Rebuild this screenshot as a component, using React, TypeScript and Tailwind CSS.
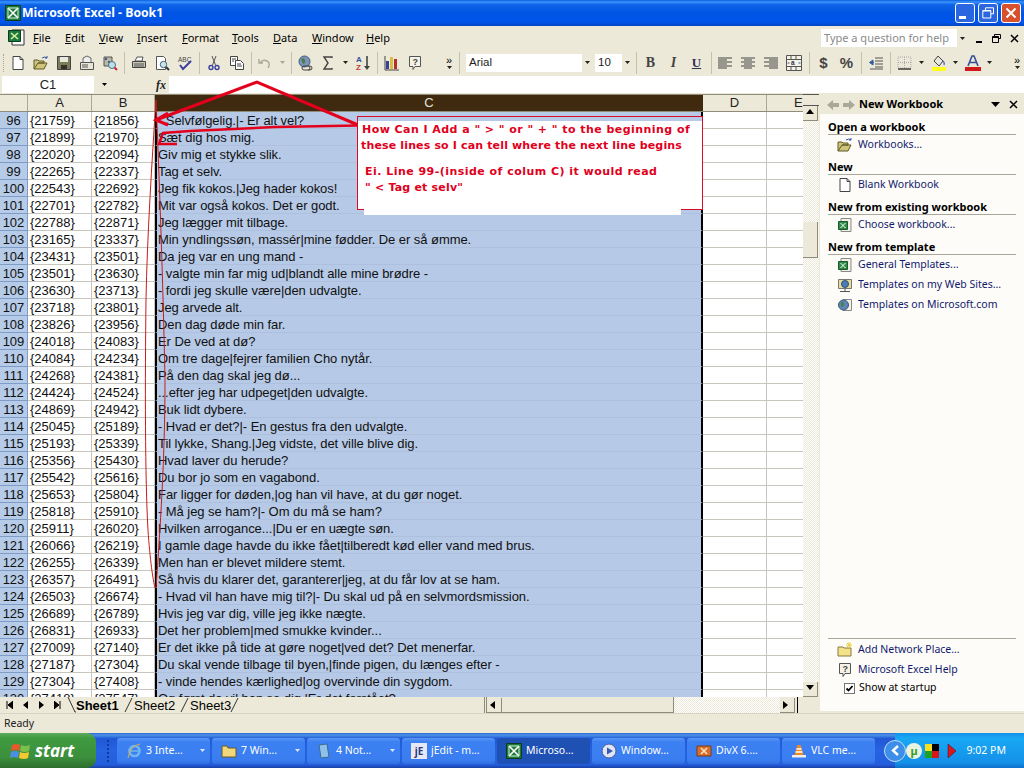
import type { ReactNode } from "react";

const ui = { fontFamily: '"Noto Sans", sans-serif' };
const arial = { fontFamily: '"Liberation Sans", sans-serif' };
const dither = "bg-[repeating-conic-gradient(#ece9d8_0_25%,#ffffff_0_50%)] bg-[length:2px_2px]";

const rows: [number, string, string, string][] = [
  [96, "{21759}", "{21856}", "- Selvfølgelig.|- Er alt vel?"],
  [97, "{21899}", "{21970}", "Sæt dig hos mig."],
  [98, "{22020}", "{22094}", "Giv mig et stykke slik."],
  [99, "{22265}", "{22337}", "Tag et selv."],
  [100, "{22543}", "{22692}", "Jeg fik kokos.|Jeg hader kokos!"],
  [101, "{22701}", "{22782}", "Mit var også kokos. Det er godt."],
  [102, "{22788}", "{22871}", "Jeg lægger mit tilbage."],
  [103, "{23165}", "{23337}", "Min yndlingssøn, massér|mine fødder. De er så ømme."],
  [104, "{23431}", "{23501}", "Da jeg var en ung mand -"],
  [105, "{23501}", "{23630}", "- valgte min far mig ud|blandt alle mine brødre -"],
  [106, "{23630}", "{23713}", "- fordi jeg skulle være|den udvalgte."],
  [107, "{23718}", "{23801}", "Jeg arvede alt."],
  [108, "{23826}", "{23956}", "Den dag døde min far."],
  [109, "{24018}", "{24083}", "Er De ved at dø?"],
  [110, "{24084}", "{24234}", "Om tre dage|fejrer familien Cho nytår."],
  [111, "{24268}", "{24381}", "På den dag skal jeg dø..."],
  [112, "{24424}", "{24524}", "...efter jeg har udpeget|den udvalgte."],
  [113, "{24869}", "{24942}", "Buk lidt dybere."],
  [114, "{25045}", "{25189}", "- Hvad er det?|- En gestus fra den udvalgte."],
  [115, "{25193}", "{25339}", "Til lykke, Shang.|Jeg vidste, det ville blive dig."],
  [116, "{25356}", "{25430}", "Hvad laver du herude?"],
  [117, "{25542}", "{25616}", "Du bor jo som en vagabond."],
  [118, "{25653}", "{25804}", "Far ligger for døden,|og han vil have, at du gør noget."],
  [119, "{25818}", "{25910}", "- Må jeg se ham?|- Om du må se ham?"],
  [120, "{25911}", "{26020}", "Hvilken arrogance...|Du er en uægte søn."],
  [121, "{26066}", "{26219}", "I gamle dage havde du ikke fået|tilberedt kød eller vand med brus."],
  [122, "{26255}", "{26339}", "Men han er blevet mildere stemt."],
  [123, "{26357}", "{26491}", "Så hvis du klarer det, garanterer|jeg, at du får lov at se ham."],
  [124, "{26503}", "{26674}", "- Hvad vil han have mig til?|- Du skal ud på en selvmordsmission."],
  [125, "{26689}", "{26789}", "Hvis jeg var dig, ville jeg ikke nægte."],
  [126, "{26831}", "{26933}", "Det her problem|med smukke kvinder..."],
  [127, "{27009}", "{27140}", "Er det ikke på tide at gøre noget|ved det? Det menerfar."],
  [128, "{27187}", "{27304}", "Du skal vende tilbage til byen,|finde pigen, du længes efter -"],
  [129, "{27304}", "{27408}", "- vinde hendes kærlighed|og overvinde din sygdom."],
  [130, "{27418}", "{27547}", "Og først da vil han se dig.|Er det forstået?"],
];

function Ico({ children, size = 16 }: { children: ReactNode; size?: number }) {
  return (
    <svg width={size} height={size} viewBox="0 0 16 16" className="shrink-0">
      {children}
    </svg>
  );
}

const NewDoc = () => (
  <Ico>
    <path d="M3 1.5h7l3 3v10H3z" fill="#fff" stroke="#444" />
    <path d="M10 1.5v3h3" fill="none" stroke="#444" />
  </Ico>
);
const OpenFolder = () => (
  <Ico>
    <path d="M1 14V5h4l1 1h5v2H5l-4 6h10l3-6H5" fill="#cfc47a" stroke="#5f5a26" />
    <path d="M9 3q3-2 5 0m0 0v-2m0 2h-2" fill="none" stroke="#33569c" />
  </Ico>
);
const Save = () => (
  <Ico>
    <path d="M1.5 1.5h13v13h-13z" fill="#7c7c58" stroke="#444" />
    <path d="M4 2h8v5H4z" fill="#e8e8e0" />
    <path d="M5 10h6v4H5z" fill="#33332a" />
  </Ico>
);
const Mail = () => (
  <Ico>
    <path d="M4 7V3l4-2 4 2v4" fill="#eee" stroke="#666" />
    <path d="M1.5 7.5h13v7h-13z" fill="#e8e6d8" stroke="#555" />
    <path d="M3 10h6M3 12h6" stroke="#555" />
  </Ico>
);
const SearchDoc = () => (
  <Ico>
    <path d="M2 2h8v9H2z" fill="#b9b7a6" stroke="#555" />
    <path d="M3 3h2v2H3zM6 6h2v2H6z" fill="#3d5c95" />
    <circle cx="10" cy="10" r="3.5" fill="#bde0e8" stroke="#4a7184" />
    <path d="M12.5 12.5l2.5 2.5" stroke="#d02030" strokeWidth="2" />
  </Ico>
);
const Printer = () => (
  <Ico>
    <path d="M4 6l2-4h6l-1 4z" fill="#fff" stroke="#555" />
    <path d="M1.5 6.5h13v6h-13z" fill="#c9c7b6" stroke="#444" />
    <path d="M3 9h10M3 11h10" stroke="#555" />
  </Ico>
);
const Preview = () => (
  <Ico>
    <path d="M2.5 1.5h7l2 2v11h-9z" fill="#fff" stroke="#555" />
    <circle cx="9.5" cy="9.5" r="3.2" fill="#cfe3ea" stroke="#3f6477" />
    <path d="M12 12l3 3" stroke="#333" strokeWidth="2" />
  </Ico>
);
const Spell = () => (
  <Ico>
    <text x="1" y="6.5" fontSize="6.5" fill="#444" fontFamily="Liberation Sans">ABC</text>
    <path d="M3 10l3 4 8-8" fill="none" stroke="#3a3f9c" strokeWidth="2" />
  </Ico>
);
const Cut = () => (
  <Ico>
    <path d="M6 1l3.5 9M10 1L6.5 10" stroke="#555" fill="none" />
    <circle cx="5" cy="12.5" r="2" fill="none" stroke="#3a3f9c" strokeWidth="1.4" />
    <circle cx="11" cy="12.5" r="2" fill="none" stroke="#3a3f9c" strokeWidth="1.4" />
  </Ico>
);
const Copy = () => (
  <Ico>
    <path d="M1.5 1.5h7v9h-7z" fill="#fff" stroke="#444" />
    <path d="M6.5 5.5h5l3 3v6h-8z" fill="#fff" stroke="#444" />
    <path d="M3 4h4M3 6h2M8 9h4M8 11h5" stroke="#444" />
  </Ico>
);
const Undo = () => (
  <Ico>
    <path d="M2 4v4h4M3 8q3-4 7-2t1 7" fill="none" stroke="#aca899" strokeWidth="1.4" />
  </Ico>
);
const Globe = () => (
  <Ico>
    <circle cx="6.5" cy="6.5" r="5.5" fill="#7c94b8" stroke="#3c5a80" />
    <path d="M3 4q3-2 4 1t-2 4z" fill="#4e7a4e" />
    <path d="M6 11h4a2 2 0 0 1 0 4H6a2 2 0 0 1 0-4zM10 11h2a2 2 0 0 1 0 4h-2" fill="none" stroke="#444" />
  </Ico>
);
const WebDoc = () => (
  <Ico>
    <path d="M6 2.5h8.5v11H6z" fill="#f4f2e6" stroke="#888" />
    <circle cx="6.5" cy="8" r="5" fill="#5f86b4" stroke="#34587c" />
    <path d="M4 5q3-1 3 2t-3 3z" fill="#4e7a4e" />
  </Ico>
);
const WebStand = () => (
  <Ico>
    <path d="M1.5 2.5h13v9h-13z" fill="#e8dc9c" stroke="#777" />
    <circle cx="8" cy="7" r="3.5" fill="#4f7cb4" stroke="#2c5078" />
    <path d="M8 11.5V14M3 14.5h10" stroke="#555" />
  </Ico>
);
const Sigma = () => (
  <Ico>
    <path d="M12 3V2H4l4 6-4 6h8v-1" fill="none" stroke="#444" strokeWidth="1.4" />
  </Ico>
);
const Sort = () => (
  <Ico>
    <text x="1" y="7" fontSize="8" fontWeight="700" fill="#334f9c" fontFamily="Liberation Sans">A</text>
    <text x="1" y="15" fontSize="8" fontWeight="700" fill="#c04040" fontFamily="Liberation Sans">Z</text>
    <path d="M12 1v12" stroke="#444" strokeWidth="1.6" />
    <path d="M9 11h6l-3 4z" fill="#444" />
  </Ico>
);
const Chart = () => (
  <Ico>
    <path d="M2 6h3v8H2z" fill="#3a3f9c" />
    <path d="M6 2h3v12H6z" fill="#d8c040" />
    <path d="M10 4h3v10h-3z" fill="#b03030" />
    <path d="M1 1v14h14" fill="none" stroke="#444" />
  </Ico>
);
const HelpBubble = () => (
  <Ico>
    <path d="M2.5 1.5h11v10H8l-2 3v-3H2.5z" fill="#f4f2e6" stroke="#555" />
    <text x="5.4" y="10" fontSize="9" fontWeight="700" fill="#444" fontFamily="Liberation Sans">?</text>
  </Ico>
);
const Align = ({ kind }: { kind: "l" | "c" | "r" }) => {
  const short = kind === "l" ? "M1 5h9M1 9h9M1 13h9" : kind === "c" ? "M4 5h8M4 9h8M4 13h8" : "M6 5h9M6 9h9M6 13h9";
  return (
    <Ico>
      <path d={`M1 3h14M1 7h14M1 11h14 ${short}`} fill="none" stroke="#444" />
    </Ico>
  );
};
const Merge = () => (
  <Ico>
    <path d="M.5.5h15v15H.5z" fill="#f4f2e6" stroke="#555" />
    <path d="M.5 4.5h15M.5 11.5h15M5 .5v4M10 .5v4M5 11.5v4M10 11.5v4" stroke="#555" />
    <text x="5" y="10.3" fontSize="6.5" fontWeight="700" fill="#334" fontFamily="Liberation Sans">a</text>
    <path d="M1.5 8h2M14.5 8h-2" stroke="#33569c" />
  </Ico>
);
const Indent = () => (
  <Ico>
    <path d="M7 3h8M7 6h8M7 9h8M7 12h8M2 14h13" stroke="#555" />
    <path d="M5 5L1.5 7.5 5 10zM4 7.5h2" fill="#335c9c" stroke="#335c9c" />
  </Ico>
);
const Borders = () => (
  <Ico>
    <path d="M1 2h13v11H1z" fill="none" stroke="#aaa" strokeDasharray="1 1" />
    <path d="M1 7.5h13M7.5 2v11" stroke="#aaa" strokeDasharray="1 1" />
    <path d="M1 14h13" stroke="#333" strokeWidth="1.4" />
  </Ico>
);
const Fill = () => (
  <Ico>
    <path d="M3 6l4-5 5 5-4 5z" fill="#e8e6d8" stroke="#444" />
    <path d="M12 6q2 2 1 4" stroke="#5a6ec0" strokeWidth="1.4" fill="none" />
    <path d="M1 12h14v4H1z" fill="#ffff20" />
  </Ico>
);
const FontColor = () => (
  <Ico>
    <path d="M3 11L7 1h2l4 10M5 7.5h6" fill="none" stroke="#334f9c" strokeWidth="1.6" />
    <path d="M0 12h16v4H0z" fill="#d01818" />
  </Ico>
);
const Drop = ({ c = "#222" }: { c?: string }) => (
  <svg width="5" height="3" viewBox="0 0 5 3" className="shrink-0">
    <path d="M0 0h5L2.5 3z" fill={c} />
  </svg>
);
const ExcelMark = ({ size = 16 }: { size?: number }) => (
  <Ico size={size}>
    <path d="M.5.5h15v15H.5z" fill="#1e7a3c" stroke="#0b3d1e" />
    <path d="M3 3l10 10M13 3L3 13" stroke="#fff" strokeWidth="1.6" />
    <path d="M3 3h10v10H3z" fill="none" stroke="#d8f0d8" />
  </Ico>
);
const ExcelDoc = () => (
  <Ico>
    <path d="M4 1.5h10v13H4z" fill="#f4f2e6" stroke="#888" />
    <path d="M1.5 4.5h9v8h-9z" fill="#2f8a4a" stroke="#1a5a2a" />
    <path d="M3.5 6l5 5M8.5 6l-5 5" stroke="#fff" />
  </Ico>
);
const NetFolder = () => (
  <Ico>
    <path d="M1 14V5h5l1 1h7v8z" fill="#f4e28a" stroke="#887a3a" />
    <path d="M12 0v6M9 3h6M10 1l4 4M14 1l-4 4" stroke="#e8d040" />
  </Ico>
);

function Slot({ w = 23, children }: { w?: number; children?: ReactNode }) {
  return (
    <div className="flex h-[22px] shrink-0 items-center justify-center" style={{ width: w }}>
      {children}
    </div>
  );
}
const Sep = () => (
  <div className="flex h-[22px] w-[6px] shrink-0 justify-center">
    <div className="h-full w-px bg-[#c4c1ae]" />
  </div>
);
const More = () => (
  <div className="flex h-[20px] w-[14px] shrink-0 flex-col items-center justify-center gap-[2px]">
    <span className="text-[11px] leading-[8px] text-black" style={arial}>»</span>
    <Drop />
  </div>
);

function TitleBar() {
  return (
    <div className="flex h-[26px] shrink-0 items-center bg-[linear-gradient(180deg,#0a5fdc_0%,#3a93ff_8%,#0e64e6_18%,#0055e5_50%,#0055eb_85%,#0246c0_100%)] pl-[5px] pr-[3px]">
      <ExcelMark />
      <span className="ml-[1px] text-[12.25px] font-bold text-white" style={{ fontFamily: '"Open Sans", sans-serif' }}>
        Microsoft Excel - Book1
      </span>
      <div className="ml-auto flex gap-[3px]">
        <div className="flex size-[20px] items-end rounded-[3px] border border-white bg-[#2a66e0] p-[3px]">
          <div className="h-[3px] w-[7px] bg-white" />
        </div>
        <div className="flex size-[20px] items-center justify-center rounded-[3px] border border-white bg-[#2a66e0]">
          <svg width="12" height="12" viewBox="0 0 12 12">
            <path d="M3.5 3V.8h8v6H9M.8 3.5h8v7.5h-8zM.8 4h8" fill="none" stroke="#fff" />
          </svg>
        </div>
        <div className="flex size-[20px] items-center justify-center rounded-[3px] border border-white bg-[#d8502c]">
          <svg width="12" height="12" viewBox="0 0 12 12">
            <path d="M1.5 1.5l9 9M10.5 1.5l-9 9" stroke="#fff" strokeWidth="2" />
          </svg>
        </div>
      </div>
    </div>
  );
}

function MenuBar() {
  const items: [string, string, string, number][] = [
    ["F", "ile", "File", 32],
    ["E", "dit", "Edit", 34],
    ["V", "iew", "View", 38],
    ["I", "nsert", "Insert", 45],
    ["F", "ormat", "Format", 50],
    ["T", "ools", "Tools", 41],
    ["D", "ata", "Data", 39],
    ["W", "indow", "Window", 54],
    ["H", "elp", "Help", 40],
  ];
  return (
    <div className="flex h-[24px] shrink-0 items-center bg-[#ece9d8] pl-[7px] text-[11px] text-black" style={ui}>
      <svg width="20" height="20" viewBox="0 0 20 20" className="shrink-0">
        <path d="M5 2h12v15H5z" fill="#fff" stroke="#333" />
        <path d="M1.5 2.5h12v11h-12z" fill="#1e7a3c" stroke="#0b3d1e" />
        <path d="M4 5l7 6M11 5l-7 6" stroke="#d8f0a0" strokeWidth="1.6" />
      </svg>
      <div className="ml-[6px] flex">
        {items.map(([u, rest, key, w]) => (
          <span key={key} className="shrink-0" style={{ width: w }}>
            <span className="underline">{u}</span>
            {rest}
          </span>
        ))}
      </div>
      <div className="ml-auto flex items-center">
        <div className="flex h-[18px] w-[147px] items-center whitespace-nowrap bg-white pl-[3px] text-[11px] text-[#8a8a8a]">
          Type a question for help
          <div className="ml-auto flex h-full w-[11px] items-center justify-center bg-[#ece9d8]">
            <Drop />
          </div>
        </div>
        <div className="ml-[5px] flex w-[51px] items-center justify-between pr-[5px]">
          <span className="ml-[3px] mt-[7px] h-[2px] w-[6px] bg-black" />
          <svg width="9" height="9" viewBox="0 0 9 9">
            <path d="M2.5 2V.5h6v4H7M.5 2.5h6v6h-6zM.5 3.5h6" fill="none" stroke="#000" />
          </svg>
          <svg width="9" height="9" viewBox="0 0 9 9">
            <path d="M1 1l7 7M8 1L1 8" stroke="#000" strokeWidth="1.5" />
          </svg>
        </div>
      </div>
    </div>
  );
}

function Toolbar() {
  return (
    <div className="flex h-[25px] shrink-0 items-center bg-[#ece9d8]">
      <div className="ml-[3px] h-[18px] w-[3px] shrink-0 border-l border-dotted border-[#a8a594]" />
      <Slot><NewDoc /></Slot>
      <Slot><OpenFolder /></Slot>
      <Slot><Save /></Slot>
      <Slot><Mail /></Slot>
      <Slot><SearchDoc /></Slot>
      <Sep />
      <Slot><Printer /></Slot>
      <Slot><Preview /></Slot>
      <Slot><Spell /></Slot>
      <Sep />
      <Slot><Cut /></Slot>
      <Slot><Copy /></Slot>
      <Sep />
      <Slot w={22}><Undo /></Slot>
      <Slot w={12}><Drop c="#aca899" /></Slot>
      <Sep />
      <Slot><Globe /></Slot>
      <Slot w={22}><Sigma /></Slot>
      <Slot w={12}><Drop /></Slot>
      <Slot><Sort /></Slot>
      <Sep />
      <Slot><Chart /></Slot>
      <Slot w={24}><HelpBubble /></Slot>
      <div className="w-[15px] shrink-0" />
      <More />
      <Sep />
      <div className="ml-[4px] flex h-[18px] w-[127px] shrink-0 items-center bg-white pl-[3px] text-[11.5px] text-[#222]" style={arial}>
        Arial
        <div className="ml-auto flex h-full w-[11px] items-center justify-center bg-[#ece9d8]"><Drop /></div>
      </div>
      <div className="ml-[2px] flex h-[18px] w-[38px] shrink-0 items-center bg-white pl-[3px] text-[11.5px] text-[#222]" style={arial}>
        10
        <div className="ml-auto flex h-full w-[11px] items-center justify-center bg-[#ece9d8]"><Drop /></div>
      </div>
      <Sep />
      <Slot><span className="text-[14px] font-bold leading-none text-[#444]" style={{ fontFamily: "Liberation Serif" }}>B</span></Slot>
      <Slot><span className="text-[14px] font-bold italic leading-none text-[#444]" style={{ fontFamily: "Liberation Serif" }}>I</span></Slot>
      <Slot><span className="text-[13px] font-bold leading-none text-[#335] underline" style={{ fontFamily: "Liberation Serif" }}>U</span></Slot>
      <Sep />
      <Slot w={22}><Align kind="l" /></Slot>
      <Slot><Align kind="c" /></Slot>
      <Slot><Align kind="r" /></Slot>
      <Slot w={24}><Merge /></Slot>
      <Sep />
      <Slot><span className="text-[15px] font-bold leading-none text-[#444]" style={arial}>$</span></Slot>
      <Slot><span className="text-[15px] font-bold leading-none text-[#444]" style={arial}>%</span></Slot>
      <Sep />
      <Slot><Indent /></Slot>
      <Sep />
      <Slot><Borders /></Slot>
      <Slot w={11}><Drop /></Slot>
      <Slot><Fill /></Slot>
      <Slot w={11}><Drop /></Slot>
      <Slot><FontColor /></Slot>
      <Slot w={11}><Drop /></Slot>
      <div className="ml-auto"><More /></div>
    </div>
  );
}

function FormulaBar() {
  return (
    <div className="flex h-[19px] shrink-0 items-center bg-[#ece9d8]" style={arial}>
      <div className="ml-[2px] flex h-[17px] w-[92px] items-center justify-center bg-white text-[13px] text-[#222]">C1</div>
      <div className="flex w-[20px] justify-center"><Drop c="#000" /></div>
      <div className="flex w-[55px] justify-end pr-[3px] text-[12px] font-bold italic text-[#222]" style={{ fontFamily: "Liberation Serif" }}>
        fx
      </div>
      <div className="h-[17px] flex-1 bg-white" />
    </div>
  );
}

const headCell = "flex h-full shrink-0 items-center justify-center border-r border-[#aca899] bg-[#ece9d8] text-[13px] text-[#222]";

function Grid() {
  return (
    <div className="flex min-h-0 flex-1 flex-col overflow-hidden bg-white text-[13px] text-[#111]" style={arial}>
      <div className="flex h-[18px] shrink-0 border-y border-[#8f8c7c]">
        <div className={`${headCell} w-[28px]`} />
        <div className={`${headCell} w-[64px]`}>A</div>
        <div className={`${headCell} w-[63px]`}>B</div>
        <div className="flex h-full w-[548px] shrink-0 items-center justify-center bg-[#3f2a10] text-[#e8e4d8]">C</div>
        <div className={`${headCell} w-[64px]`}>D</div>
        <div className="flex h-full flex-1 items-center overflow-hidden bg-[#ece9d8] pl-[27px] text-[#222]">E</div>
      </div>
      {rows.map(([n, a, b, c]) => (
        <div key={n} className="flex h-[17px] shrink-0">
          <div className="flex h-full w-[28px] shrink-0 items-center justify-center border-r border-b border-[#7f9cc6] bg-[#b5cbe8] leading-none">{n}</div>
          <div className="flex h-full w-[64px] shrink-0 items-center border-r border-b border-[#c8c6bc] pl-[2px] leading-none">{a}</div>
          <div className="flex h-full w-[63px] shrink-0 items-center border-r border-b border-[#c8c6bc] pl-[2px] leading-none">{b}</div>
          <div className="flex h-full w-[548px] shrink-0 items-center border-x-2 border-x-black border-b border-b-[#adc0dd] bg-[#b6c9e6] pl-[1px] leading-none">
            <span className="whitespace-nowrap tracking-[-0.06px]">{c}</span>
          </div>
          <div className="h-full w-[64px] shrink-0 border-r border-b border-[#c8c6bc]" />
          <div className="h-full flex-1 border-b border-[#c8c6bc]" />
        </div>
      ))}
    </div>
  );
}

function ScrollBtn({ dir }: { dir: "up" | "down" | "left" | "right" }) {
  const d = { up: "M0 5h8L4 0z", down: "M0 0h8L4 5z", left: "M5 0v8L0 4z", right: "M0 0v8l5-4z" }[dir];
  return (
    <div className="flex size-[15px] shrink-0 items-center justify-center border-r border-b border-[#8f8c7c] bg-[#ece9d8]">
      <svg width="8" height="8" viewBox="0 0 8 8">
        <path d={d} fill="#000" />
      </svg>
    </div>
  );
}

function VScroll() {
  return (
    <div className="flex w-[16px] shrink-0 flex-col bg-[#ece9d8]">
      <div className="h-[12px] shrink-0 border-y border-[#555] bg-[#ece9d8]" />
      <ScrollBtn dir="up" />
      <div className={`flex flex-1 flex-col pt-[101px] ${dither}`}>
        <div className="h-[36px] w-[15px] border-r border-b border-[#8f8c7c] bg-[#ece9d8]" />
      </div>
      <ScrollBtn dir="down" />
    </div>
  );
}

function TabEdge({ back }: { back?: boolean }) {
  return (
    <svg width="10" height="16" viewBox="0 0 10 16" className="shrink-0">
      <path d={back ? "M2 0l7 15h1" : "M8 1L1 15"} fill="none" stroke="#333" />
    </svg>
  );
}

function SheetTabs() {
  return (
    <div className="flex h-[16px] shrink-0 items-center overflow-hidden bg-[#ece9d8] text-[13px] leading-none text-black" style={arial}>
      <div className="ml-px flex w-[65px] shrink-0 items-center">
        <div className="flex w-[16px] justify-center"><svg width="7" height="8" viewBox="0 0 7 8"><path d="M1 0v8M7 0v8L2 4z" stroke="#000" strokeWidth="1" /></svg></div>
        <div className="flex w-[16px] justify-center"><svg width="5" height="8" viewBox="0 0 5 8"><path d="M5 0v8L0 4z" /></svg></div>
        <div className="flex w-[16px] justify-center"><svg width="5" height="8" viewBox="0 0 5 8"><path d="M0 0v8l5-4z" /></svg></div>
        <div className="flex w-[16px] justify-center"><svg width="7" height="8" viewBox="0 0 7 8"><path d="M0 0v8l5-4zM6 0v8" stroke="#000" strokeWidth="1" /></svg></div>
      </div>
      <TabEdge back />
      <span className="w-[48px] shrink-0 font-bold">Sheet1</span>
      <TabEdge />
      <span className="w-[46px] shrink-0">Sheet2</span>
      <TabEdge />
      <span className="w-[40px] shrink-0">Sheet3</span>
      <TabEdge />
      <div className="ml-auto flex h-full w-[335px] items-center">
        <div className="h-full w-[3px] shrink-0 border-x border-[#8f8c7c]" />
        <ScrollBtn dir="left" />
        <div className="h-full w-[172px] shrink-0 border-r border-b border-[#8f8c7c] bg-[#ece9d8]" />
        <div className={`h-full flex-1 ${dither}`} />
        <ScrollBtn dir="right" />
        <div className="ml-[2px] mr-[21px] h-full w-px bg-black" />
      </div>
    </div>
  );
}

function PaneSection({ title }: { title: string }) {
  return <div className="mx-[8px] mt-[5px] border-b border-[#aca899] text-[11px] font-bold leading-[14px] text-black">{title}</div>;
}

function PaneLink({ icon, children }: { icon: ReactNode; children: ReactNode }) {
  return (
    <div className="flex h-[20px] items-center pl-[17px] text-[10.5px] text-[#111a6e]">
      <div className="flex w-[21px] shrink-0 justify-start">{icon}</div>
      {children}
    </div>
  );
}

function TaskPane() {
  return (
    <div className="flex w-[205px] shrink-0 flex-col bg-[#ece9d8] pb-[1px] pl-[1px]" style={ui}>
      <div className="flex flex-1 flex-col border-y border-[#ece9d8] bg-[#fdfcf8]">
        <div className="mb-[1px] flex h-[19px] shrink-0 items-center bg-[#ece9d8] pl-[7px] pr-[6px] text-[11px] font-bold text-black">
          <svg width="12" height="10" viewBox="0 0 12 10"><path d="M6 0v3h6v4H6v3L0 5z" fill="#aca899" /></svg>
          <svg width="12" height="10" viewBox="0 0 12 10" className="ml-[4px]"><path d="M6 0v3H0v4h6v3l6-5z" fill="#aca899" /></svg>
          <span className="ml-[4px]">New Workbook</span>
          <div className="ml-auto mr-[9px]">
            <svg width="9" height="5" viewBox="0 0 9 5"><path d="M0 0h9L4.5 5z" fill="#000" /></svg>
          </div>
          <svg width="9" height="9" viewBox="0 0 9 9"><path d="M1 1l7 7M8 1L1 8" stroke="#000" strokeWidth="1.5" /></svg>
        </div>
        <PaneSection title="Open a workbook" />
        <PaneLink icon={<OpenFolder />}>Workbooks...</PaneLink>
        <PaneSection title="New" />
        <PaneLink icon={<NewDoc />}>Blank Workbook</PaneLink>
        <PaneSection title="New from existing workbook" />
        <PaneLink icon={<ExcelDoc />}>Choose workbook...</PaneLink>
        <PaneSection title="New from template" />
        <PaneLink icon={<ExcelDoc />}>General Templates...</PaneLink>
        <PaneLink icon={<WebStand />}>Templates on my Web Sites...</PaneLink>
        <PaneLink icon={<WebDoc />}>Templates on Microsoft.com</PaneLink>
        <div className="mx-[8px] mt-auto border-t border-[#aca899] pt-[1px]">
          <div className="-ml-[8px]">
            <PaneLink icon={<NetFolder />}>Add Network Place...</PaneLink>
            <PaneLink icon={<HelpBubble />}>Microsoft Excel Help</PaneLink>
            <div className="mb-[15px] flex h-[16px] items-center pl-[24px] text-[10.5px] text-black">
              <div className="mr-[4px] flex size-[11px] items-center justify-center border border-[#777] bg-white">
                <svg width="9" height="9" viewBox="0 0 9 9"><path d="M1.5 4.5l2 2 4-4.5" fill="none" stroke="#000" strokeWidth="1.8" /></svg>
              </div>
              Show at startup
            </div>
          </div>
        </div>
      </div>
    </div>
  );
}

function TaskButton({ icon, label, count, active }: { icon: ReactNode; label: string; count?: boolean; active?: boolean }) {
  return (
    <div
      className={`flex h-[26px] w-[93px] shrink-0 items-center rounded-[3px] pl-[9px] pr-[5px] text-[10.5px] text-white ${
        active ? "bg-[#1f50b4]" : "bg-[linear-gradient(180deg,#5a97f5_0%,#3c81f3_15%,#3a7df0_85%,#2f6fe0_100%)]"
      }`}
    >
      <div className="mr-[4px] shrink-0">{icon}</div>
      <span className="truncate whitespace-nowrap">{label}</span>
      {count && <div className="ml-auto shrink-0"><Drop c="#dfe8ff" /></div>}
    </div>
  );
}

function Taskbar() {
  return (
    <div
      className="flex h-[35px] shrink-0 items-center bg-[linear-gradient(180deg,#3168d5_0%,#4993e6_6%,#2157d7_16%,#2663e0_50%,#245edc_90%,#1941a5_100%)] text-white"
      style={ui}
    >
      <div className="flex h-full w-[96px] shrink-0 items-center rounded-r-[9px] bg-[linear-gradient(180deg,#5dac5d_0%,#3f9a3f_15%,#3c8f3c_70%,#2c6e2c_100%)] pl-[10px]">
        <svg width="22" height="20" viewBox="0 0 22 20">
          <path d="M2 4q4-2 8 0l-1 6q-4-2-8 0z" fill="#e8582c" />
          <path d="M11 4q4 2 9 0l-1 6q-4 2-9 0z" fill="#7cc04a" />
          <path d="M1 11q4-2 8 0l-1 6q-4-2-8 0z" fill="#4a8ee8" />
          <path d="M10 11q4 2 9 0l-1 6q-4 2-9 0z" fill="#f4c830" />
        </svg>
        <span className="ml-[3px] text-[17px] font-bold italic leading-none" style={{ fontFamily: '"Open Sans", sans-serif' }}>start</span>
      </div>
      <div className="ml-[11px] mr-[7px] h-[22px] w-[3px] shrink-0 border-l-2 border-dotted border-[#123a96]" />
      <div className="flex gap-[2px]">
        <TaskButton count label="3 Inte..." icon={<svg width="16" height="16" viewBox="0 0 16 16"><circle cx="8.5" cy="8" r="5" fill="none" stroke="#6fb6f2" strokeWidth="2.6" /><path d="M3 8h11" stroke="#6fb6f2" strokeWidth="1.5" /><path d="M14 1Q4 3 2 15" fill="none" stroke="#e0b040" /></svg>} />
        <TaskButton count label="7 Win..." icon={<svg width="16" height="16" viewBox="0 0 16 16"><path d="M1 14V3h5l1 2h8v9z" fill="#f2d67c" stroke="#6a5a20" /></svg>} />
        <TaskButton count label="4 Not..." icon={<svg width="16" height="16" viewBox="0 0 16 16"><path d="M3 2l8-1 2 13-8 1z" fill="#8fc0e8" stroke="#3c6a94" /></svg>} />
        <TaskButton label="jEdit - m..." icon={<div className="flex size-[16px] items-center justify-center bg-[#e8e8f4] text-[10px] font-bold leading-none text-[#2a3a7a]">jE</div>} />
        <TaskButton active label="Microso..." icon={<ExcelMark />} />
        <TaskButton label="Window..." icon={<svg width="16" height="16" viewBox="0 0 16 16"><circle cx="8" cy="8" r="7" fill="#dfe6f4" stroke="#4a5a94" /><path d="M6 4.5l6 3.5-6 3.5z" fill="#3a58b8" /></svg>} />
        <TaskButton label="DivX 6...." icon={<svg width="16" height="16" viewBox="0 0 16 16"><path d="M1 3h14v10H1z" fill="#d8702c" stroke="#7a3a14" /><path d="M5 5l6 6M11 5l-6 6" stroke="#f8e0c0" strokeWidth="1.6" /></svg>} />
        <TaskButton label="VLC me..." icon={<svg width="16" height="16" viewBox="0 0 16 16"><path d="M6.5 2h3l3 10h-9z" fill="#f08a20" /><path d="M5.5 6h5M4.6 9h6.8" stroke="#fff" strokeWidth="1.5" /><path d="M1 12h14v2.5H1z" fill="#eee" /></svg>} />
      </div>
      <div className="ml-[20px] flex h-full flex-1 items-center bg-[linear-gradient(180deg,#1290e8_0%,#18a8f4_15%,#1490e8_85%,#0c70c8_100%)] pr-[18px] text-[10.5px]">
        <div className="-ml-[11px] flex size-[22px] items-center justify-center rounded-full border border-[#bcdcf8] bg-[#3c8ee8]">
          <svg width="9" height="11" viewBox="0 0 9 11"><path d="M7 1L2 5.5 7 10" fill="none" stroke="#fff" strokeWidth="2.4" /></svg>
        </div>
        <div className="flex size-[16px] items-center justify-center rounded-full bg-[#e8f4e0] text-[11px] font-bold leading-none text-[#3a9a2a]">µ</div>
        <div className="ml-[3px] grid size-[14px] grid-cols-2 grid-rows-2">
          <div className="bg-[#f8e020]" />
          <div className="bg-black" />
          <div className="bg-[#20a020]" />
          <div className="bg-[#d81818]" />
        </div>
        <svg width="10" height="14" viewBox="0 0 10 14" className="ml-[8px]"><path d="M1 0l8 7-8 7z" fill="#d81820" stroke="#500" strokeWidth=".5" /></svg>
        <span className="ml-auto">9:02 PM</span>
      </div>
    </div>
  );
}

function Annotation() {
  return (
    <>
      <svg width="1024" height="768" viewBox="0 0 1024 768" className="pointer-events-none absolute left-0 top-0 z-10">
        <path d="M156 120L257 82L358 125" fill="none" stroke="#e4001c" strokeWidth="3" />
        <path d="M168 113L156 120L168 125" fill="none" stroke="#e4001c" strokeWidth="3" />
        <path d="M358 125.5L275 127L190 131L163 133L159 144L177 144" fill="none" stroke="#e4001c" strokeWidth="2.5" />
        <path d="M156 100C152 160 147 240 146 300C145 380 145 480 148 530C150 560 153 580 155 588" fill="none" stroke="#c81c1c" strokeWidth="1" />
        <path d="M156 100C159 170 163 280 165 380C165 460 160 530 156 588" fill="none" stroke="#c81c1c" strokeWidth="1" />
      </svg>
      <div
        className="absolute left-[357px] top-[116px] z-20 h-[94px] w-[346px] border border-[#d80c24] bg-white pl-[4px] text-[11px] font-bold leading-[16px] text-[#e00020]"
        style={{ fontFamily: '"DejaVu Sans", sans-serif' }}
      >
        <div className="-ml-[4px] mb-[1px] h-[4px] bg-[#b6c9e6]" />
        <div className="whitespace-nowrap tracking-[0.45px]">How Can I Add a " &gt; " or " + " to the beginning of</div>
        <div className="-ml-[1px] whitespace-nowrap tracking-[0.15px]">these lines so I can tell where the next line begins</div>
        <div className="ml-[3px] mt-[10px] whitespace-nowrap tracking-[0.47px]">Ei. Line 99-(inside of colum C) it would read</div>
        <div className="ml-[3px] whitespace-nowrap tracking-[0.2px]">" &lt; Tag et selv"</div>
      </div>
      <div className="absolute left-[364px] top-[209px] z-20 h-[6px] w-[317px] bg-white" />
    </>
  );
}

export default function App() {
  return (
    <div className="relative flex h-[768px] w-[1024px] flex-col overflow-hidden bg-[#ece9d8]">
      <TitleBar />
      <MenuBar />
      <Toolbar />
      <FormulaBar />
      <div className="flex min-h-0 flex-1">
        <div className="flex w-[819px] shrink-0 flex-col">
          <div className="flex min-h-0 flex-1">
            <Grid />
            <VScroll />
          </div>
          <SheetTabs />
        </div>
        <TaskPane />
      </div>
      <div className="flex h-[20px] shrink-0 items-center border-t border-[#d8d5c4] bg-[#ece9d8] pl-[4px] text-[10.5px] text-[#222]" style={ui}>
        Ready
      </div>
      <Taskbar />
      <Annotation />
    </div>
  );
}
